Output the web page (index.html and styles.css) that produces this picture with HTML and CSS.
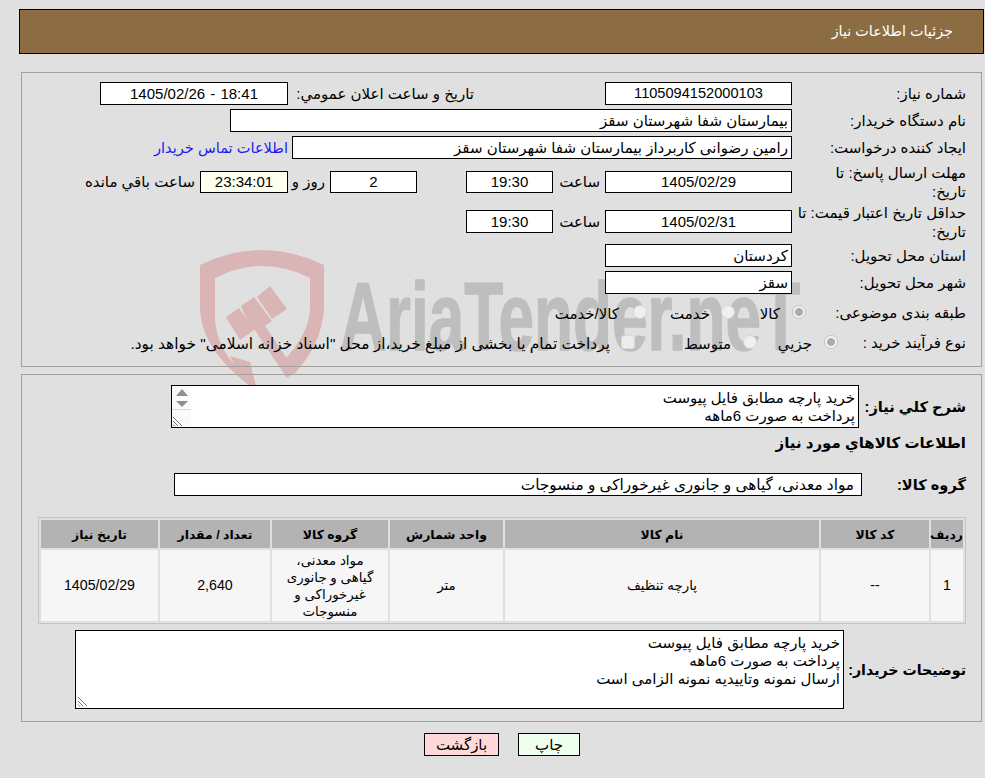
FILE: index.html
```html
<!DOCTYPE html>
<html lang="fa" dir="rtl">
<head>
<meta charset="utf-8">
<title>جزئیات اطلاعات نیاز</title>
<link rel="stylesheet" href="styles.css">
</head>
<body>
<svg class="watermark" width="985" height="778" viewBox="0 0 985 778" aria-hidden="true">
  <path class="wm-shield" fill-rule="evenodd" d="M200 265 Q262 235 324 265 L324 308 Q322 345 293 375 L283 361 Q309 335 310 308 L310 278 Q262 254 215 278 L215 320 Q217 345 234 364 L230 356 L250 362 L256 386 L250 386 Q202 350 200 310 Z"/>
  <path class="wm-shield" d="M270 286 L287 309 L272 319 L257 297 Z M241 306 L254 297 L272 321 L265 326 L296 372 L287 378 L254 329 L251 330 Z M226 317 L239 308 L254 330 L240 340 Z"/>
  <text class="wm-text" x="340" y="350" textLength="460" lengthAdjust="spacingAndGlyphs" direction="ltr">AriaTender.neT</text>
</svg>

<header class="title-bar">جزئیات اطلاعات نیاز</header>

<section class="panel panel-info">
  <div class="row">
    <label class="lbl">شماره نیاز:</label>
    <div class="field w187 center num">1105094152000103</div>
    <label class="lbl-announce">تاریخ و ساعت اعلان عمومي:</label>
    <div class="field w188 center num stamp">18:41 - 1405/02/26</div>
  </div>
  <div class="row">
    <label class="lbl">نام دستگاه خریدار:</label>
    <div class="field w562">بیمارستان شفا شهرستان سقز</div>
  </div>
  <div class="row">
    <label class="lbl">ایجاد کننده درخواست:</label>
    <div class="field w500">رامین رضوانی کاربرداز بیمارستان شفا شهرستان سقز</div>
    <a class="contact" href="#">اطلاعات تماس خریدار</a>
  </div>
  <div class="row row-deadline">
    <label class="lbl">مهلت ارسال پاسخ: تا<br>تاریخ:</label>
    <div class="field w187 h22 center num date">1405/02/29</div>
    <span class="txt txt-hour">ساعت</span>
    <div class="field w87 h22 center num date">19:30</div>
    <div class="field w87 h22 center num date days">2</div>
    <span class="txt txt-days">روز و</span>
    <div class="field w88 h22 center num date timer">23:34:01</div>
    <span class="txt txt-left">ساعت باقي مانده</span>
  </div>
  <div class="row row-validity">
    <label class="lbl">حداقل تاریخ اعتبار قیمت: تا تاریخ:</label>
    <div class="field w187 center num date">1405/02/31</div>
    <span class="txt txt-hour">ساعت</span>
    <div class="field w87 center num date">19:30</div>
  </div>
  <div class="row">
    <label class="lbl">استان محل تحویل:</label>
    <div class="field w187">کردستان</div>
  </div>
  <div class="row">
    <label class="lbl">شهر محل تحویل:</label>
    <div class="field w187">سقز</div>
  </div>
  <div class="row row-radio">
    <label class="lbl">طبقه بندی موضوعی:</label>
    <span class="radio checked r-kala"></span><span class="opt opt-kala">کالا</span>
    <span class="radio r-khed"></span><span class="opt opt-khed">خدمت</span>
    <span class="radio r-both"></span><span class="opt opt-both">کالا/خدمت</span>
  </div>
  <div class="row row-radio row-last">
    <label class="lbl">نوع فرآیند خرید :</label>
    <span class="radio checked r-joz"></span><span class="opt opt-joz">جزيي</span>
    <span class="radio r-mot"></span><span class="opt opt-mot">متوسط</span>
    <span class="radio square r-third"></span>
    <span class="opt opt-pay">پرداخت تمام یا بخشی از مبلغ خرید،از محل "اسناد خزانه اسلامی" خواهد بود.</span>
  </div>
</section>

<section class="panel panel-items">
  <div class="desc-row">
    <label class="lbl-bold lbl-desc">شرح کلي نياز:</label>
    <div class="area area-short">
      <div class="area-text">خرید پارچه مطابق فایل پیوست<br>پرداخت به صورت 6ماهه</div>
      <div class="scrollbar">
        <svg class="arrows" width="19" height="41" viewBox="0 0 19 41" aria-hidden="true">
          <path class="arrow" d="M4 10 L10 3 L16 10 Z"/>
          <path class="arrow" d="M4 15 L16 15 L10 21 Z"/>
          <path class="sb-line" d="M0 23.5 H19"/>
          <path class="grip" d="M1 31 L10 40 M1 35 L6 40 M1 38.5 L3 40.5"/>
        </svg>
      </div>
    </div>
  </div>
  <h2 class="section-title">اطلاعات کالاهاي مورد نياز</h2>
  <div class="group-row">
    <label class="lbl-bold lbl-group">گروه کالا:</label>
    <div class="field w688 group-field">مواد معدنی، گیاهی و جانوری غیرخوراکی و منسوجات</div>
  </div>
  <table class="items">
    <colgroup>
      <col class="c1"><col class="c2"><col class="c3"><col class="c4"><col class="c5"><col class="c6"><col class="c7">
    </colgroup>
    <thead>
      <tr><th>ردیف</th><th>کد کالا</th><th>نام کالا</th><th>واحد شمارش</th><th>گروه کالا</th><th>تعداد / مقدار</th><th>تاریخ نیاز</th></tr>
    </thead>
    <tbody>
      <tr><td class="n">1</td><td class="n">--</td><td>پارچه تنظیف</td><td>متر</td><td class="wrap">مواد معدنی، گیاهی و جانوری غیرخوراکی و منسوجات</td><td class="n">2,640</td><td class="n">1405/02/29</td></tr>
    </tbody>
  </table>
  <div class="note-row">
    <label class="lbl-bold lbl-note">توضیحات خریدار:</label>
    <div class="area area-tall">
      <div class="area-text">خرید پارچه مطابق فایل پیوست<br>پرداخت به صورت 6ماهه<br>ارسال نمونه وتاییدیه نمونه الزامی است</div>
      <svg class="grip-tall" width="11" height="11" viewBox="0 0 11 11" aria-hidden="true">
        <path class="grip" d="M1 1 L10 10 M1 5 L6 10 M1 8.5 L3 10.5"/>
      </svg>
    </div>
  </div>
</section>

<div class="actions">
  <button class="btn btn-print" type="button">چاپ</button>
  <button class="btn btn-back" type="button">بازگشت</button>
</div>
</body>
</html>
```
FILE: styles.css
```css
* { box-sizing: border-box; }
html, body { margin: 0; padding: 0; }
body {
  width: 985px;
  height: 778px;
  overflow: hidden;
  position: relative;
  background: #e0e0e0;
  color: #000;
  font-family: "Liberation Sans", "DejaVu Sans", sans-serif;
  font-size: 15px;
  padding-top: 9px;
}
.watermark { position: absolute; left: 0; top: 0; z-index: 0; }
.wm-shield { fill: #d9b5b5; }
.wm-text {
  fill: #bebebe;
  stroke: #bebebe;
  stroke-width: 1.5;
  font-family: "Liberation Sans", sans-serif;
  font-weight: 700;
  font-size: 97px;
}
.title-bar {
  position: relative;
  z-index: 1;
  width: 965px;
  margin-right: 1px;
  height: 45px;
  line-height: 43px;
  background: #8c6d43;
  border: 1px solid #000;
  color: #fff;
  font-size: 14.4px;
  padding-right: 30px;
}
.panel {
  position: relative;
  z-index: 1;
  width: 961px;
  margin-right: 3px;
  border: 1px solid #a0a0a0;
}
.panel-info {
  margin-top: 18px;
  height: 295px;
  padding: 9px 15px 0 0;
  display: flex;
  flex-direction: column;
  gap: 4px;
}
.panel-items {
  margin-top: 7px;
  height: 348px;
  padding: 10px 15px 0 0;
}
.row { display: flex; align-items: center; height: 23px; position: relative; }
.row-deadline { height: 37px; }
.row-validity { height: 35px; margin-bottom: 1px; }
.row-radio { height: 28px; }
.row-last { margin-top: -2px; }
.lbl { width: 170px; margin-left: 4px; flex: none; line-height: 19px; }
.field {
  flex: none;
  height: 23px;
  line-height: 21px;
  background: #fff;
  border: 1px solid #000;
  padding: 0 3px;
  white-space: nowrap;
  overflow: hidden;
}
.h22 { height: 22px; line-height: 20px; }
.num { font-size: 14.6px; }
.date { font-size: 15px; }
.stamp { font-size: 15px; word-spacing: 1px; }
.center { text-align: center; }
.w187 { width: 187px; }
.w188 { width: 188px; }
.w87 { width: 87px; }
.w88 { width: 88px; }
.w500 { width: 500px; }
.w562 { width: 562px; }
.w688 { width: 688px; }
.lbl-announce { margin-right: 131px; width: 186px; flex: none; }
.contact { color: #1a1af0; text-decoration: none; margin-right: 4px; white-space: nowrap; font-size: 14.6px; }
.txt { white-space: nowrap; flex: none; }
.txt-hour { margin-right: 5px; width: 47px; }
.days { margin-right: 49px; }
.txt-days { margin-right: 5px; width: 37px; }
.timer { background: #fffff0; }
.txt-left { margin-right: 5px; }
.radio {
  position: absolute;
  top: 7px;
  width: 14px;
  height: 14px;
  border-radius: 50%;
  background: #f0f0f0;
  border: 1px solid #d6d6d6;
}
.radio.checked { background: radial-gradient(circle, #ababab 0 3.6px, #f3f3f3 4.3px); border-color: #c4c4c4; }
.radio.square { border-radius: 3px; background: #ececec; border-color: #d8d8d8; }
.opt { position: absolute; white-space: nowrap; }
.row-radio .opt { top: 7px; }
.r-kala { right: 160px; }
.opt-kala { right: 186px; }
.r-khed { right: 231px; }
.opt-khed { right: 256px; }
.r-both { right: 319px; }
.opt-both { right: 347px; }
.r-joz { right: 128px; }
.opt-joz { right: 154px; }
.r-mot { right: 209px; }
.opt-mot { right: 235px; }
.r-third { right: 331px; }
.opt-pay { right: 356px; font-size: 15.4px; }

.desc-row { display: flex; align-items: center; height: 43px; }
.lbl-bold { font-weight: 700; flex: none; font-size: 14.6px; }
.lbl-desc { width: 107px; }
.area {
  flex: none;
  position: relative;
  background: #fff;
  border: 1px solid #000;
  overflow: hidden;
}
.area-short { width: 688px; height: 43px; }
.area-tall { width: 769px; height: 79px; }
.area-text { padding: 3px 3px 0; line-height: 18px; white-space: nowrap; }
.scrollbar {
  position: absolute;
  left: 0;
  top: 0;
  width: 19px;
  height: 41px;
  background: #fafafa;
}
.arrows { display: block; }
.arrow { fill: #8f8f8f; }
.sb-line { stroke: #dadada; fill: none; }
.grip { stroke: #777; stroke-width: 1; fill: none; }
.grip-tall { position: absolute; left: 1px; bottom: 1px; }
.section-title {
  margin: 5px 0 0;
  height: 40px;
  line-height: 20px;
  font-size: 15px;
  font-weight: 700;
}
.group-row { display: flex; align-items: center; height: 23px; }
.lbl-group { width: 104px; }
.group-field { padding-right: 7px; font-size: 15.3px; }
.items {
  margin: 21px 0 0;
  width: 928px;
  border: 1px solid #c4c4c4;
  border-spacing: 2px;
  border-collapse: separate;
  table-layout: fixed;
  font-size: 13.4px;
}
.c1 { width: 32px; }
.c2 { width: 108px; }
.c3 { width: 314px; }
.c4 { width: 113px; }
.c5 { width: 116px; }
.c6 { width: 110px; }
.c7 { width: 117px; }
.items th {
  background: #b3b3b3;
  height: 28px;
  padding: 0;
  font-size: 12.4px;
  font-weight: 700;
  text-align: center;
  white-space: nowrap;
}
.items td {
  background: #f6f6f6;
  height: 71px;
  padding: 0;
  text-align: center;
  line-height: 17px;
}
.items td.n { font-size: 14.2px; }
.items td.wrap { padding: 0 11px; }
.note-row { display: flex; align-items: center; margin-top: 6px; }
.lbl-note { width: 122px; font-size: 14.2px; }
.actions {
  position: relative;
  z-index: 1;
  margin-top: 11px;
  display: flex;
  gap: 19px;
  padding-right: 405px;
}
.btn {
  font: inherit;
  height: 23px;
  line-height: 20px;
  padding: 0;
  border: 1px solid #000;
  color: #000;
}
.btn-back { width: 75px; background: #ffd9d9; }
.btn-print { width: 62px; background: #eeffee; }
```
